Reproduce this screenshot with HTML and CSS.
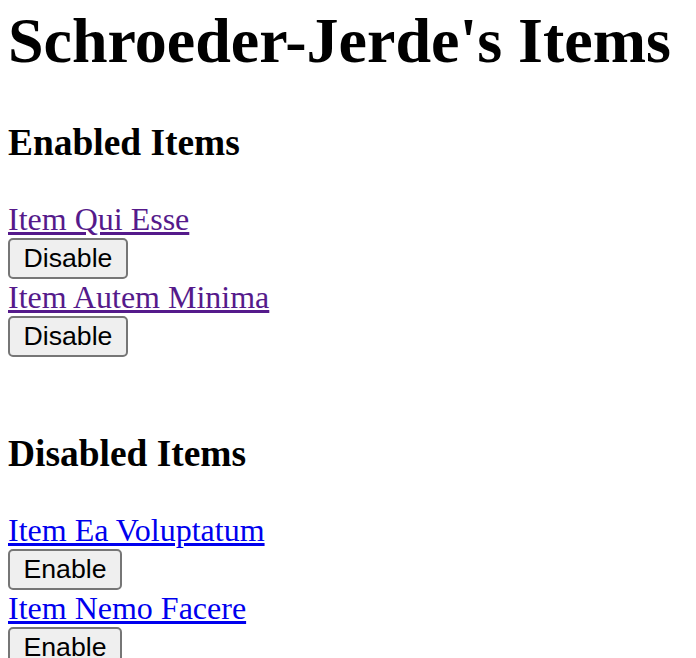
FILE: index.html
```html
<!DOCTYPE html>
<html>
<head>
<meta charset="utf-8">
<title>Schroeder-Jerde's Items</title>
<link rel="stylesheet" href="styles.css">
</head>
<body class="page">
  <h1 class="title">Schroeder-Jerde's Items</h1>
  <section class="group">
    <h3 class="group-title">Enabled Items</h3>
    <div class="item">
      <a class="item-link visited" href="#qui-esse">Item Qui Esse</a>
      <button class="item-btn" type="button">Disable</button>
    </div>
    <div class="item">
      <a class="item-link visited" href="#autem-minima">Item Autem Minima</a>
      <button class="item-btn" type="button">Disable</button>
    </div>
  </section>
  <div class="spacer"></div>
  <section class="group">
    <h3 class="group-title">Disabled Items</h3>
    <div class="item">
      <a class="item-link" href="#ea-voluptatum">Item Ea Voluptatum</a>
      <button class="item-btn" type="button">Enable</button>
    </div>
    <div class="item">
      <a class="item-link" href="#nemo-facere">Item Nemo Facere</a>
      <button class="item-btn" type="button">Enable</button>
    </div>
  </section>
</body>
</html>
```
FILE: styles.css
```css
.page {
  margin: 4px 8px 8px;
  font-family: "Liberation Serif", "Times New Roman", serif;
  font-size: 32px;
  color: #000;
  background: #fff;
}

.title {
  font-size: 64px;
  font-weight: bold;
  margin: 0 0 42.88px;
}

.group-title {
  font-size: 37.44px;
  font-weight: bold;
  margin: 37.44px 0;
}

.item {
  display: flex;
  flex-direction: column;
  align-items: flex-start;
}

.item-link {
  color: #0000ee;
  text-decoration: underline;
  line-height: normal;
}

.item-link.visited {
  color: #551a8b;
}

.item-btn {
  display: block;
  font-family: "Liberation Sans", Arial, sans-serif;
  font-size: 26.67px;
  line-height: normal;
  color: #000;
  background: #efefef;
  border: 2px solid #767676;
  border-radius: 5px;
  padding: 3px 13.5px;
  margin: 0;
}

.spacer {
  height: 36.8px;
}
```
